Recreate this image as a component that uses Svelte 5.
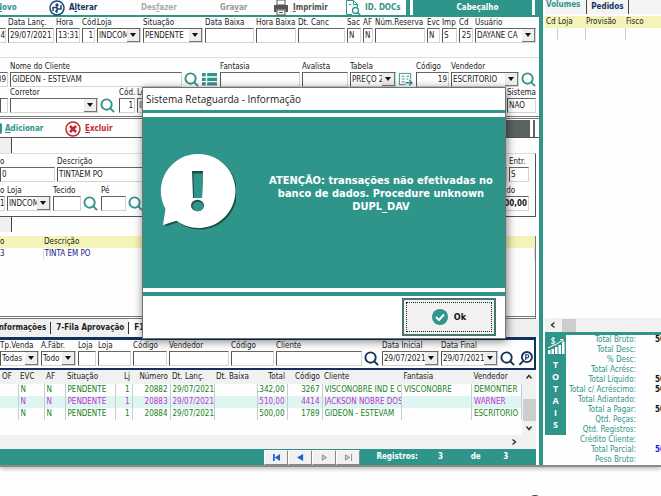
<script lang="ts">
	type Item = {
		kind?: 'text' | 'select' | 'search' | 'list' | 'export';
		label?: string;
		value?: string;
		right?: boolean;
		bold?: boolean;
	};

	const orderFields: Item[] = [
		{ value: '4', right: true, label: '' },
		{ label: 'Data Lanç.', value: '29/07/2021' },
		{ label: 'Hora', value: '13:31' },
		{ label: 'Cód.', value: '1', right: true },
		{ kind: 'select', label: 'Loja', value: 'INDCOM' },
		{ kind: 'select', label: 'Situação', value: 'PENDENTE' },
		{ label: 'Data Baixa' },
		{ label: 'Hora Baixa' },
		{ label: 'Dt. Canc' },
		{ label: 'Sac', value: 'N' },
		{ label: 'AF', value: 'N' },
		{ label: 'Núm.Reserva' },
		{ label: 'Evc', value: 'N' },
		{ label: 'Imp', value: 'S' },
		{ label: 'Cd', value: '25', right: true },
		{ kind: 'select', label: 'Usuário', value: 'DAYANE CA' }
	];

	const clientFields: Item[] = [
		{ value: '89', right: true, label: '' },
		{ label: 'Nome do Cliente', value: 'GIDEON - ESTEVAM' },
		{ kind: 'search' },
		{ kind: 'list' },
		{ label: 'Fantasia' },
		{ label: 'Avalista' },
		{ kind: 'select', label: 'Tabela', value: 'PREÇO 2' },
		{ kind: 'export' },
		{ label: 'Código', value: '19', right: true },
		{ kind: 'select', label: 'Vendedor', value: 'ESCRITORIO' },
		{ kind: 'search' }
	];

	const brokerFields: Item[] = [
		{ label: '' },
		{ kind: 'select', label: 'Corretor', value: '' },
		{ kind: 'search' },
		{ label: 'Cód.', value: '1', right: true },
		{ kind: 'select', label: 'Loja', value: 'INDCOM' },
		{ label: 'Sistema', value: 'NÃO' }
	];

	const productFields: Item[] = [
		{ label: 'o', value: '0' },
		{ label: 'Descrição', value: 'TINTAEM PO' },
		{ label: 'Qtd', value: '0', right: true },
		{ label: 'Entr.', value: 'S' }
	];

	const stockFields: Item[] = [
		{ label: 'o', value: '1', right: true },
		{ kind: 'select', label: 'Loja', value: 'INDCOM' },
		{ label: 'Tecido' },
		{ kind: 'search' },
		{ label: 'Pé' },
		{ kind: 'search' },
		{ label: 'Cor' },
		{ label: 'Líquido', value: '500,00', right: true, bold: true }
	];

	const orders = [
		['', 'N', 'N', 'PENDENTE', '1', '20882', '29/07/2021', '', '1.342,00', '3267', 'VISCONOBRE IND E COM', 'VISCONOBRE', 'DEMONTIER'],
		['', 'N', 'N', 'PENDENTE', '1', '20883', '29/07/2021', '', '1.510,00', '4414', 'JACKSON NOBRE DOS', '', 'WARNER'],
		['', 'N', 'N', 'PENDENTE', '1', '20884', '29/07/2021', '', '500,00', '1789', 'GIDEON - ESTEVAM', '', 'ESCRITORIO']
	];
	const orderColumns = ['OF', 'EVC', 'AF', 'Situação', 'Lj', 'Número', 'Dt. Lanç.', 'Dt. Baixa', 'Total', 'Código', 'Cliente', 'Fantasia', 'Vendedor'];
	const numeric = [4, 5, 8, 9];

	const totals = [
		['Total Bruto:', '500,00'],
		['Total Desc:', ''],
		['% Desc:', ''],
		['Total Acrésc:', ''],
		['Total Líquido:', '500,00'],
		['Total c/ Acréscimo:', '500,00'],
		['Total Adiantado:', ''],
		['Total a Pagar:', '500,00'],
		['Qtd. Peças:', ''],
		['Qtd. Registros:', ''],
		['Crédito Cliente:', ''],
		['Total Parcial:', '500,00'],
		['Peso Bruto:', '']
	];

	let selected = $state(1);
	let showDialog = $state(true);
</script>

{#snippet lens(letter = '')}
	<svg class="lens" viewBox="0 0 16 16" aria-hidden="true">
		{#if letter}
			<circle cx="9.5" cy="6.5" r="5.4" />
			<path d="M5.6 10.6 1.5 14.8" />
			<path class="thin" d="M8.3 9.6V4h1.5a1.6 1.6 0 0 1 0 3.3H8.3" />
		{:else}
			<circle cx="7" cy="7" r="5.5" />
			<path d="m11 11 4 4" />
		{/if}
	</svg>
{/snippet}

{#snippet field(f: Item)}
	{#if f.kind === 'search'}
		<button class="icon" aria-label="Pesquisar">{@render lens()}</button>
	{:else if f.kind === 'list'}
		<button class="icon" aria-label="Lista">
			<svg viewBox="0 0 16 16">
				<path d="M0 1h4v3.500H0zM5.500 1H16v3.500H5.500zM0 6h4v3.500H0zM5.500 6H16v3.500H5.500zM0 11h4v3.500H0zM5.500 11H16v3.500H5.500z" fill="#2f958a" />
			</svg>
		</button>
	{:else if f.kind === 'export'}
		<button class="icon" aria-label="Exportar">
			<svg viewBox="0 0 16 16" fill="none" stroke="#2f958a">
				<path d="M13.500 8V1.500h-12v12H8M4 4.500h3M4 7.500h3M4 10.500h3M9 4.500h3M9 7.500h2" />
				<path d="M8 11.500h6M12 8.500l3 3-3 3" stroke-width="1.500" />
			</svg>
		</button>
	{:else}
		<label class="field">
			<span class="caption">{f.label}</span>
			{#if f.kind === 'select'}
				<span class="combo">
					<select><option>{f.value}</option></select>
					<span class="drop"></span>
				</span>
			{:else}
				<input class:right={f.right} class:bold={f.bold} value={f.value ?? ''} />
			{/if}
		</label>
	{/if}
{/snippet}

<main>
	<div class="window">
		<section class="left">
			<div class="toolbar">
				<button class="tool new"><span><u>N</u>ovo</span></button>
				<button class="tool edit">
					<svg viewBox="0 0 16 16" fill="none" stroke="#1f4573">
						<circle cx="8" cy="8" r="7" stroke-width="1.500" />
						<path d="M4 11V7.500h4V4M6.500 5.500 8 4l1.500 1.500M12 5v4H8v3.500M6.500 10.500 8 12.500" stroke-width="1.500" />
					</svg>
					<span>A<u>l</u>terar</span>
				</button>
				<button class="tool undo" disabled><span>Des<u>f</u>azer</span></button>
				<button class="tool save" disabled><span>Gra<u>v</u>ar</span></button>
				<button class="tool print">
					<svg viewBox="0 0 16 16">
						<path d="M4 0h8v5H4z" fill="none" stroke="#555" />
						<path d="M1 5h14v7h-2.500V9.500h-9V12H1z" fill="#555" />
						<path d="M4 10h8v5H4zM6 12.500h4" fill="#fff" stroke="#555" />
					</svg>
					<span><u>I</u>mprimir</span>
				</button>
				<button class="tool docs">
					<svg viewBox="0 0 16 16" fill="none" stroke="#2f958a">
						<path d="M7 14.500H1.500V.5h7l4 4V7M8.500.5v4h4M4 4.500h2" />
						<circle cx="10.500" cy="10.500" r="3" stroke-width="1.300" />
						<path d="m12.800 12.800 2.700 2.700" stroke-width="1.500" />
					</svg>
					<span>ID. DOCs</span>
				</button>
				<div class="heading"><span>Cabeçalho</span></div>
			</div>

			<div class="row order">
				{#each orderFields as f}{@render field(f)}{/each}
			</div>
			<div class="row client">
				{#each clientFields as f}{@render field(f)}{/each}
			</div>
			<div class="row broker">
				{#each brokerFields as f}{@render field(f)}{/each}
			</div>

			<div class="toolbar items">
				<span class="knob"></span>
				<button class="tool add"><span><u>A</u>dicionar</span></button>
				<button class="tool remove">
					<svg viewBox="0 0 16 16" fill="none" stroke="#c1282d">
						<circle cx="8" cy="8" r="7" stroke-width="1.500" />
						<path d="m5 5 6 6m0-6-6 6" stroke-width="2.500" />
					</svg>
					<span><u>E</u>xcluir</span>
				</button>
				<div class="grip"></div>
			</div>
			<div class="stub"></div>
			<div class="product-box">
				<div class="row product">
					{#each productFields as f}{@render field(f)}{/each}
				</div>
				<div class="row stock">
					{#each stockFields as f}{@render field(f)}{/each}
				</div>
			</div>
			<div class="stub"></div>
			<div class="items-box">
				<table class="items-table">
					<thead><tr><th>o</th><th>Descrição</th></tr></thead>
					<tbody><tr><td>3</td><td>TINTA EM PO</td></tr></tbody>
				</table>
			</div>

			<nav class="tabs">
				<button>Informações</button>
				<button>7-Fila Aprovação</button>
				<button class="current">F11-Pedidos</button>
			</nav>
			<div class="row filter">
				{@render field({ kind: 'select', label: 'Tp.Venda', value: 'Todas' })}
				{@render field({ kind: 'select', label: 'A.Fábr.', value: 'Todo' })}
				{@render field({ label: 'Loja' })}
				{@render field({ label: 'Loja' })}
				{@render field({ label: 'Código' })}
				{@render field({ label: 'Vendedor' })}
				{@render field({ label: 'Código' })}
				{@render field({ label: 'Cliente' })}
				{@render field({ kind: 'search' })}
				{@render field({ kind: 'select', label: 'Data Inicial', value: '29/07/2021' })}
				{@render field({ kind: 'select', label: 'Data Final', value: '29/07/2021' })}
				{@render field({ kind: 'search' })}
				<button class="icon" aria-label="Pesquisar pedido">{@render lens('P')}</button>
			</div>

			<div class="orders-box">
				<table class="orders">
					<colgroup>
						{#each orderColumns as _, i}<col class="c{i}" />{/each}
					</colgroup>
					<thead>
						<tr>{#each orderColumns as c, i}<th class:right={numeric.includes(i)}>{c}</th>{/each}</tr>
					</thead>
					<tbody>
						{#each orders as o, r}
							<tr class:selected={r === selected} onclick={() => (selected = r)}>
								{#each o as cell, i}
									<td class:right={numeric.includes(i)}><div>{cell}</div></td>
								{/each}
							</tr>
						{/each}
					</tbody>
				</table>
				<div class="vscroll">
					<svg viewBox="0 0 8 8"><path d="m1.500 5.500 2.500-3 2.500 3" /></svg>
					<span class="thumb"></span>
					<svg viewBox="0 0 8 8"><path d="m1.500 2.500 2.500 3 2.500-3" /></svg>
				</div>
			</div>
			<div class="hscroll end">
				<svg viewBox="0 0 8 8"><path d="m2.500 1.500 3 2.500-3 2.500" /></svg>
			</div>
			<div class="pager">
				<button aria-label="Primeiro"><svg viewBox="0 0 10 8" fill="#1c62c4"><path d="M1 0h2v8H1zM9 0v8L3 4z" /></svg></button>
				<button aria-label="Anterior"><svg viewBox="0 0 10 8" fill="#1c62c4"><path d="M8 0v8L1 4z" /></svg></button>
				<button aria-label="Próximo"><svg viewBox="0 0 10 8" fill="#ccc" stroke="#888"><path d="M2.500 1v6l5-3z" /></svg></button>
				<button aria-label="Último"><svg viewBox="0 0 10 8" fill="#ccc" stroke="#888"><path d="M1.500 1v6l5-3zM8.500 0v8" /></svg></button>
				<span class="records">Registros:</span>
				<span>3</span>
				<span>de</span>
				<span>3</span>
			</div>
		</section>

		<aside>
			<nav class="side-tabs">
				<button>Volumes</button>
				<button class="current">Pedidos</button>
			</nav>
			<table class="volumes">
				<thead><tr><th>Cd</th><th>Loja</th><th>Provisão</th><th>Fisco</th></tr></thead>
				<tbody><tr><td></td><td></td><td></td><td></td></tr></tbody>
			</table>
			<div class="blank"></div>
			<div class="hscroll">
				<svg viewBox="0 0 8 8"><path d="m5.500 1.500-3 2.500 3 2.500" /></svg>
				<span class="thumb"></span>
			</div>
			<div class="totals">
				<div class="banner">
					<svg viewBox="0 0 18 18" fill="#fff">
						<path d="M1 13h2.500v4H1zM4.500 12H7v5H4.500zM8 10h2.500v7H8zM11.500 8H14v9h-2.500zM15 5h2.500v12H15z" />
						<path d="m1 11 5-2.500 3-1L15.500 3M13 2.500h3v3M8 1.500C6.500.5 4.500 1 4.500 2.500S8 3.500 8 5s-2.500 2-4 .800M6.200 0v7.500" fill="none" stroke="#fff" />
					</svg>
					{#each 'TOTAIS' as ch}<span>{ch}</span>{/each}
				</div>
				<dl>
					{#each totals as [name, value]}
						<dt>{name}</dt>
						<dd class:parcial={name === 'Total Parcial:'}>{value}</dd>
					{/each}
				</dl>
			</div>
		</aside>
	</div>

	<div class="dock">
		<svg viewBox="0 0 14 14"><circle cx="7" cy="7" r="7" fill="#1f3566" /></svg>
	</div>

	{#if showDialog}
		<div class="dialog" role="alertdialog" aria-labelledby="dialog-title" aria-describedby="dialog-text">
			<h1 id="dialog-title">Sistema Retaguarda - Informação</h1>
			<div class="message">
				<svg viewBox="0 0 76 78">
					<path class="shade" d="M38.500 1a37 37 0 1 1-22 66.800L4 72l2.500-16A37 37 0 0 1 38.500 1z" transform="translate(1.500 1.500)" />
					<path d="M38.500 1a37 37 0 1 1-22 66.800L3 72l2.500-16A37 37 0 0 1 38.500 1z" fill="#fff" />
					<path class="shade" d="M32 18h11l-1 27h-9z" />
					<path d="M33.500 20.500H43L42 45h-8z" fill="#2f958a" />
					<ellipse class="shade" cx="37.500" cy="52.500" rx="6.500" ry="5.800" />
					<ellipse cx="38" cy="53.500" rx="5.500" ry="4.800" fill="#2f958a" />
				</svg>
				<p id="dialog-text">ATENÇÃO: transações não efetivadas no banco de dados. Procedure unknown DUPL_DAV</p>
			</div>
			<div class="actions">
				<button onclick={() => (showDialog = false)}>
					<svg viewBox="0 0 16 16">
						<circle cx="8" cy="8" r="8" fill="#2f958a" />
						<path d="m4 8 3 3 5-5.500" fill="none" stroke="#fff" stroke-width="2" />
					</svg>
					Ok
				</button>
			</div>
		</div>
	{/if}
</main>

<style>
	:global(body) {
		background: #fefefe;
		overflow: hidden;
	}
	main {
		--teal: #2f958a;
		--navy: #15325f;
		--ui: 'DejaVu Sans Condensed', 'DejaVu Sans', sans-serif;
		position: relative;
		font: 8px/10px var(--ui);
		color: #222;
	}
	button,
	input,
	select {
		font: inherit;
		color: inherit;
		margin: 0;
		padding: 0;
		border: 0;
		border-radius: 0;
		background: none;
		box-sizing: border-box;
	}
	u {
		text-underline-offset: 1px;
	}
	svg {
		display: block;
		flex: none;
	}
	.window {
		display: grid;
		grid-template-columns: minmax(0, 1fr) 118px;
		border-bottom: 2px solid #8a8a8a;
		box-shadow: 0 2px 4px #bbb;
		overflow: hidden;
	}
	.left {
		border-right: 4px solid var(--teal);
		min-width: 0;
	}

	.toolbar {
		display: flex;
		align-items: center;
		height: 15px;
		border-bottom: 2px solid var(--teal);
		font-weight: bold;
	}
	.tool {
		display: flex;
		align-items: center;
		gap: 4px;
		font-weight: bold;
		white-space: nowrap;
	}
	.tool svg {
		width: 16px;
		height: 16px;
	}
	.new {
		width: 53px;
		margin-left: -4px;
		color: var(--teal);
	}
	.edit {
		width: 92px;
		color: var(--navy);
	}
	.undo {
		width: 79px;
		color: #aaa;
	}
	.save {
		width: 53px;
		color: #999;
	}
	.print {
		width: 72px;
		color: #555;
	}
	.docs {
		width: 61px;
		color: var(--teal);
	}
	.heading {
		flex: 1;
		align-self: stretch;
		border-left: 4px solid var(--teal);
		padding-left: 3px;
		color: #fff;
	}
	.heading span {
		display: block;
		height: 15px;
		line-height: 15px;
		padding-left: 10px;
		border-right: 3px solid #fff;
		box-shadow: 4px 0 var(--teal);
		margin-right: 4px;
		background: var(--teal);
		text-align: center;
	}

	.row {
		display: grid;
		gap: 2px;
		align-items: end;
		padding-right: 3px;
	}
	.order {
		grid-template-columns: 6px 46px 24px 13px 44px 60px 49px 40px 47px 14px 10px 50px 13px 15px 14px minmax(0, 1fr);
		padding-bottom: 14px;
		border-bottom: 1px solid #ddd;
	}
	.client {
		grid-template-columns: 14px minmax(0, 1fr) 16px 16px 80px 46px 46px 16px 33px 68px 15px;
		margin-left: -6px;
		padding-top: 3px;
	}
	.broker {
		grid-template-columns: 8px 88px 17px 16px minmax(0, 1fr) 29px;
		padding-bottom: 3px;
		border-bottom: 3px double #777;
	}
	.product-box {
		margin-right: 3px;
		padding: 2px 3px 5px 0;
		border: solid #555;
		border-width: 0 1px 1px 0;
		border-top: 1px solid #ddd;
	}
	.product {
		grid-template-columns: 55px minmax(0, 1fr) 26px 20px;
		padding-bottom: 3px;
	}
	.stock {
		grid-template-columns: 5px 44px 28px 16px 25px 15px minmax(0, 1fr) 40px;
	}
	.filter {
		grid-template-columns: 39px 35px 18px 33px 34px 60px 43px minmax(0, 1fr) 16px 57px 57px 16px 15px;
		margin-right: 3px;
		padding-right: 1px;
		padding-bottom: 2px;
		border: solid var(--navy);
		border-width: 3px 2px 2px 0;
		--lens: var(--navy);
	}
	.field {
		display: flex;
		flex-direction: column;
		min-width: 0;
	}
	.caption {
		height: 11px;
		line-height: 11px;
		white-space: nowrap;
	}
	input,
	.combo {
		width: 100%;
		height: 15px;
		border: 1px solid #d4d4d4;
		border-top-color: #666;
		border-left-color: #555;
		background: #fff;
		box-sizing: border-box;
	}
	input {
		padding-left: 1px;
	}
	input.right {
		text-align: right;
		padding: 0 1px 0 0;
	}
	.order .field:first-child input,
	.stock .field:first-child input {
		border-left: 0;
		padding: 0;
	}
	.bold {
		font-weight: bold;
	}
	.combo {
		display: grid;
		grid-template-columns: minmax(0, 1fr) 13px;
	}
	select {
		appearance: none;
		min-width: 0;
		width: 100%;
		height: 13px;
		padding-left: 1px;
		grid-area: 1 / 1;
		overflow: hidden;
	}
	.drop {
		display: grid;
		place-items: center;
		background: #eee;
		border-right: 1px solid #777;
		border-bottom: 1px solid #777;
		pointer-events: none;
	}
	.drop::before {
		content: '';
		border: 3px solid transparent;
		border-top: 4px solid #111;
		border-bottom: 0;
	}
	.icon {
		width: 15px;
		height: 15px;
	}
	.icon svg {
		width: 15px;
		height: 15px;
	}
	.lens {
		fill: none;
		stroke: var(--lens, #2f958a);
		stroke-width: 2;
	}
	.thin {
		stroke-width: 1.2;
	}

	.items {
		height: 17px;
		margin-top: 1px;
		border-bottom: 1px solid #555;
	}
	.knob {
		width: 2px;
		height: 11px;
		margin-right: 3px;
		border-radius: 0 6px 6px 0;
		background: var(--teal);
	}
	.add {
		width: 60px;
		color: var(--teal);
	}
	.remove {
		color: #c1282d;
	}
	.grip {
		flex: 1;
		align-self: stretch;
		margin: 0 4px 0 32px;
		background: linear-gradient(90deg, #fff, #fff) right 2px center / 3px 100% no-repeat #5c6262;
	}
	.stub {
		width: 11px;
		height: 15px;
		border-right: 1px solid #444;
		background: #f0f0f0;
	}

	.items-box {
		height: 80px;
		margin-right: 3px;
		border: solid #777;
		border-width: 0 1px 3px 0;
		border-bottom-style: double;
	}
	table {
		border-collapse: collapse;
		table-layout: fixed;
		width: 100%;
	}
	th,
	td {
		padding: 0;
		text-align: left;
		font-weight: normal;
		white-space: nowrap;
	}
	.items-table {
		margin-top: 4px;
	}
	.items-table tr {
		height: 12px;
	}
	.items-table th {
		background: #f4f4b8;
	}
	.items-table th:first-child {
		width: 43px;
	}
	.items-table td {
		color: #1a1a8c;
		border-right: 1px solid #ddd;
	}
	.items-table :is(th, td) + :is(th, td) {
		padding-left: 1px;
	}

	.tabs {
		display: flex;
		height: 18px;
		margin-left: -4px;
		background: #f0f0f0;
	}
	.tabs button {
		padding: 0 4px 0 5px;
		margin: 3px 0;
		border-right: 1px solid #333;
		font-weight: bold;
	}
	.tabs button:first-child {
		padding-left: 0;
	}
	.tabs .current {
		margin: 0;
		border: 0;
		background: #fff;
	}

	.orders-box {
		display: grid;
		grid-template-columns: minmax(0, 1fr) 14px;
		height: 65px;
		margin-right: 3px;
	}
	.orders {
		align-self: start;
	}
	.orders tr {
		height: 12px;
	}
	.orders thead tr {
		height: 14px;
	}
	.orders th {
		background: #f1f1f1;
	}
	.orders :is(th, td) {
		padding: 0 0 0 2px;
	}
	.orders .right {
		text-align: right;
		padding: 0 2px 0 0;
	}
	.orders td {
		color: #16801c;
		border-right: 1px solid #c4cfcf;
	}
	.orders td div {
		display: flex;
		overflow: hidden;
	}
	.orders td.right div {
		justify-content: flex-end;
	}
	.orders .selected td {
		background: #dff5f2;
		color: #c030d0;
	}
	.c0 { width: 18px; }
	.c1 { width: 26px; }
	.c2 { width: 21px; }
	.c3 { width: 50px; }
	.c4 { width: 17px; }
	.c5 { width: 38px; }
	.c6 { width: 44px; }
	.c7 { width: 43px; }
	.c8 { width: 30px; }
	.c9 { width: 35px; }
	.c11 { width: 70px; }
	.c12 { width: 50px; }

	.vscroll {
		display: flex;
		flex-direction: column;
		align-items: center;
		justify-content: space-between;
		padding: 3px 0;
		background: #f1f1f1;
	}
	.vscroll svg,
	.hscroll svg {
		width: 8px;
		height: 8px;
		fill: none;
		stroke: #333;
		stroke-width: 1.5;
	}
	.vscroll .thumb {
		width: 13px;
		height: 22px;
		margin-top: 14px;
		background: #cdcdcd;
	}
	.hscroll {
		display: flex;
		align-items: center;
		gap: 5px;
		height: 14px;
		padding-left: 4px;
		background: #f1f1f1;
	}
	.hscroll.end {
		justify-content: flex-end;
		margin-right: 3px;
		padding-right: 18px;
	}
	.hscroll .thumb {
		width: 14px;
		height: 13px;
		background: #cdcdcd;
	}
	.pager {
		display: flex;
		align-items: center;
		height: 16px;
		margin-right: 3px;
		padding-left: 264px;
		background: var(--teal);
		color: #fff;
		font-weight: bold;
	}
	.pager button {
		display: grid;
		place-items: center;
		width: 25px;
		height: 15px;
		border: 1px solid #888;
		border-top-color: #fff;
		border-left-color: #fff;
		background: #f1f1f1;
	}
	.pager svg {
		width: 9px;
		height: 7px;
	}
	.pager span {
		width: 34px;
	}
	.pager .records {
		width: 64px;
		margin-left: 16px;
	}

	aside {
		display: flex;
		flex-direction: column;
		min-width: 0;
		padding-left: 2px;
		overflow: hidden;
	}
	.side-tabs {
		display: flex;
		height: 14px;
		background: #f4f4f4;
	}
	.side-tabs button {
		padding: 0 6px 0 1px;
		height: 10px;
		color: var(--teal);
		font-weight: bold;
	}
	.side-tabs .current {
		height: 14px;
		padding: 0 4px;
		border: solid #444;
		border-width: 0 1px;
		color: var(--navy);
	}
	.volumes {
		margin-top: 2px;
	}
	.volumes tr {
		height: 12px;
	}
	.volumes th {
		background: #f4f4b8;
		padding-left: 1px;
	}
	.volumes th:first-child {
		width: 11px;
	}
	.volumes th:nth-child(2) {
		width: 27px;
	}
	.volumes th:nth-child(3) {
		width: 39px;
	}
	.volumes td + td {
		border-left: 1px solid #ccc;
	}
	.blank {
		flex: 1;
	}
	.totals {
		display: grid;
		grid-template-columns: 21px minmax(0, 1fr);
		align-items: start;
		border-top: 3px solid var(--teal);
	}
	.banner {
		display: flex;
		flex-direction: column;
		align-items: center;
		padding-bottom: 4px;
		background: var(--teal);
		color: #fff;
		font: bold 9px/12px 'Open Sans', sans-serif;
	}
	.banner svg {
		width: 18px;
		height: 18px;
		margin: 2px 0 4px;
	}
	dl {
		display: grid;
		grid-template-columns: 70px minmax(0, 1fr);
		grid-auto-rows: 10px;
		column-gap: 19px;
		margin: 0;
		color: var(--teal);
	}
	dt {
		justify-self: end;
		white-space: nowrap;
	}
	dd {
		margin: 0;
		color: #111;
		font-weight: bold;
	}
	dd.parcial {
		color: #1a1ae0;
	}

	.dock {
		display: flex;
		justify-content: flex-end;
		height: 2px;
		padding: 28px 119px 0 0;
		overflow: hidden;
	}
	.dock svg {
		width: 14px;
		height: 14px;
	}

	.dialog {
		position: absolute;
		top: 87px;
		left: 142px;
		width: 364px;
		box-sizing: border-box;
		border: 1px solid #6b7474;
		background: #fff;
		box-shadow: 1px 2px 9px #0008;
	}
	h1 {
		margin: 0;
		padding-left: 3px;
		font: 10px/22px 'Open Sans', sans-serif;
		border-bottom: 3px solid var(--teal);
	}
	.message {
		display: flex;
		align-items: center;
		height: 171px;
		margin: 4px 0;
		padding: 0 9px 0 17px;
		box-sizing: border-box;
		background: var(--teal);
		color: #fff;
	}
	.message svg {
		width: 76px;
		height: 78px;
		margin-bottom: 22px;
	}
	.message .shade {
		fill: #1f4e4a;
	}
	p {
		flex: 1;
		margin: 0 0 18px 30px;
		font: bold 11px/13px var(--ui);
		text-align: center;
	}
	.actions {
		display: flex;
		justify-content: flex-end;
		padding: 2px 9px;
		border-top: 4px solid var(--teal);
	}
	.actions button {
		display: flex;
		align-items: center;
		justify-content: center;
		gap: 6px;
		width: 94px;
		height: 38px;
		border: 2px solid #45776f;
		outline: 1px dotted #222;
		outline-offset: -5px;
		background: #f1f1f1;
		color: #111;
		font: bold 9px/12px var(--ui);
	}
	.actions svg {
		width: 16px;
		height: 16px;
	}
</style>
